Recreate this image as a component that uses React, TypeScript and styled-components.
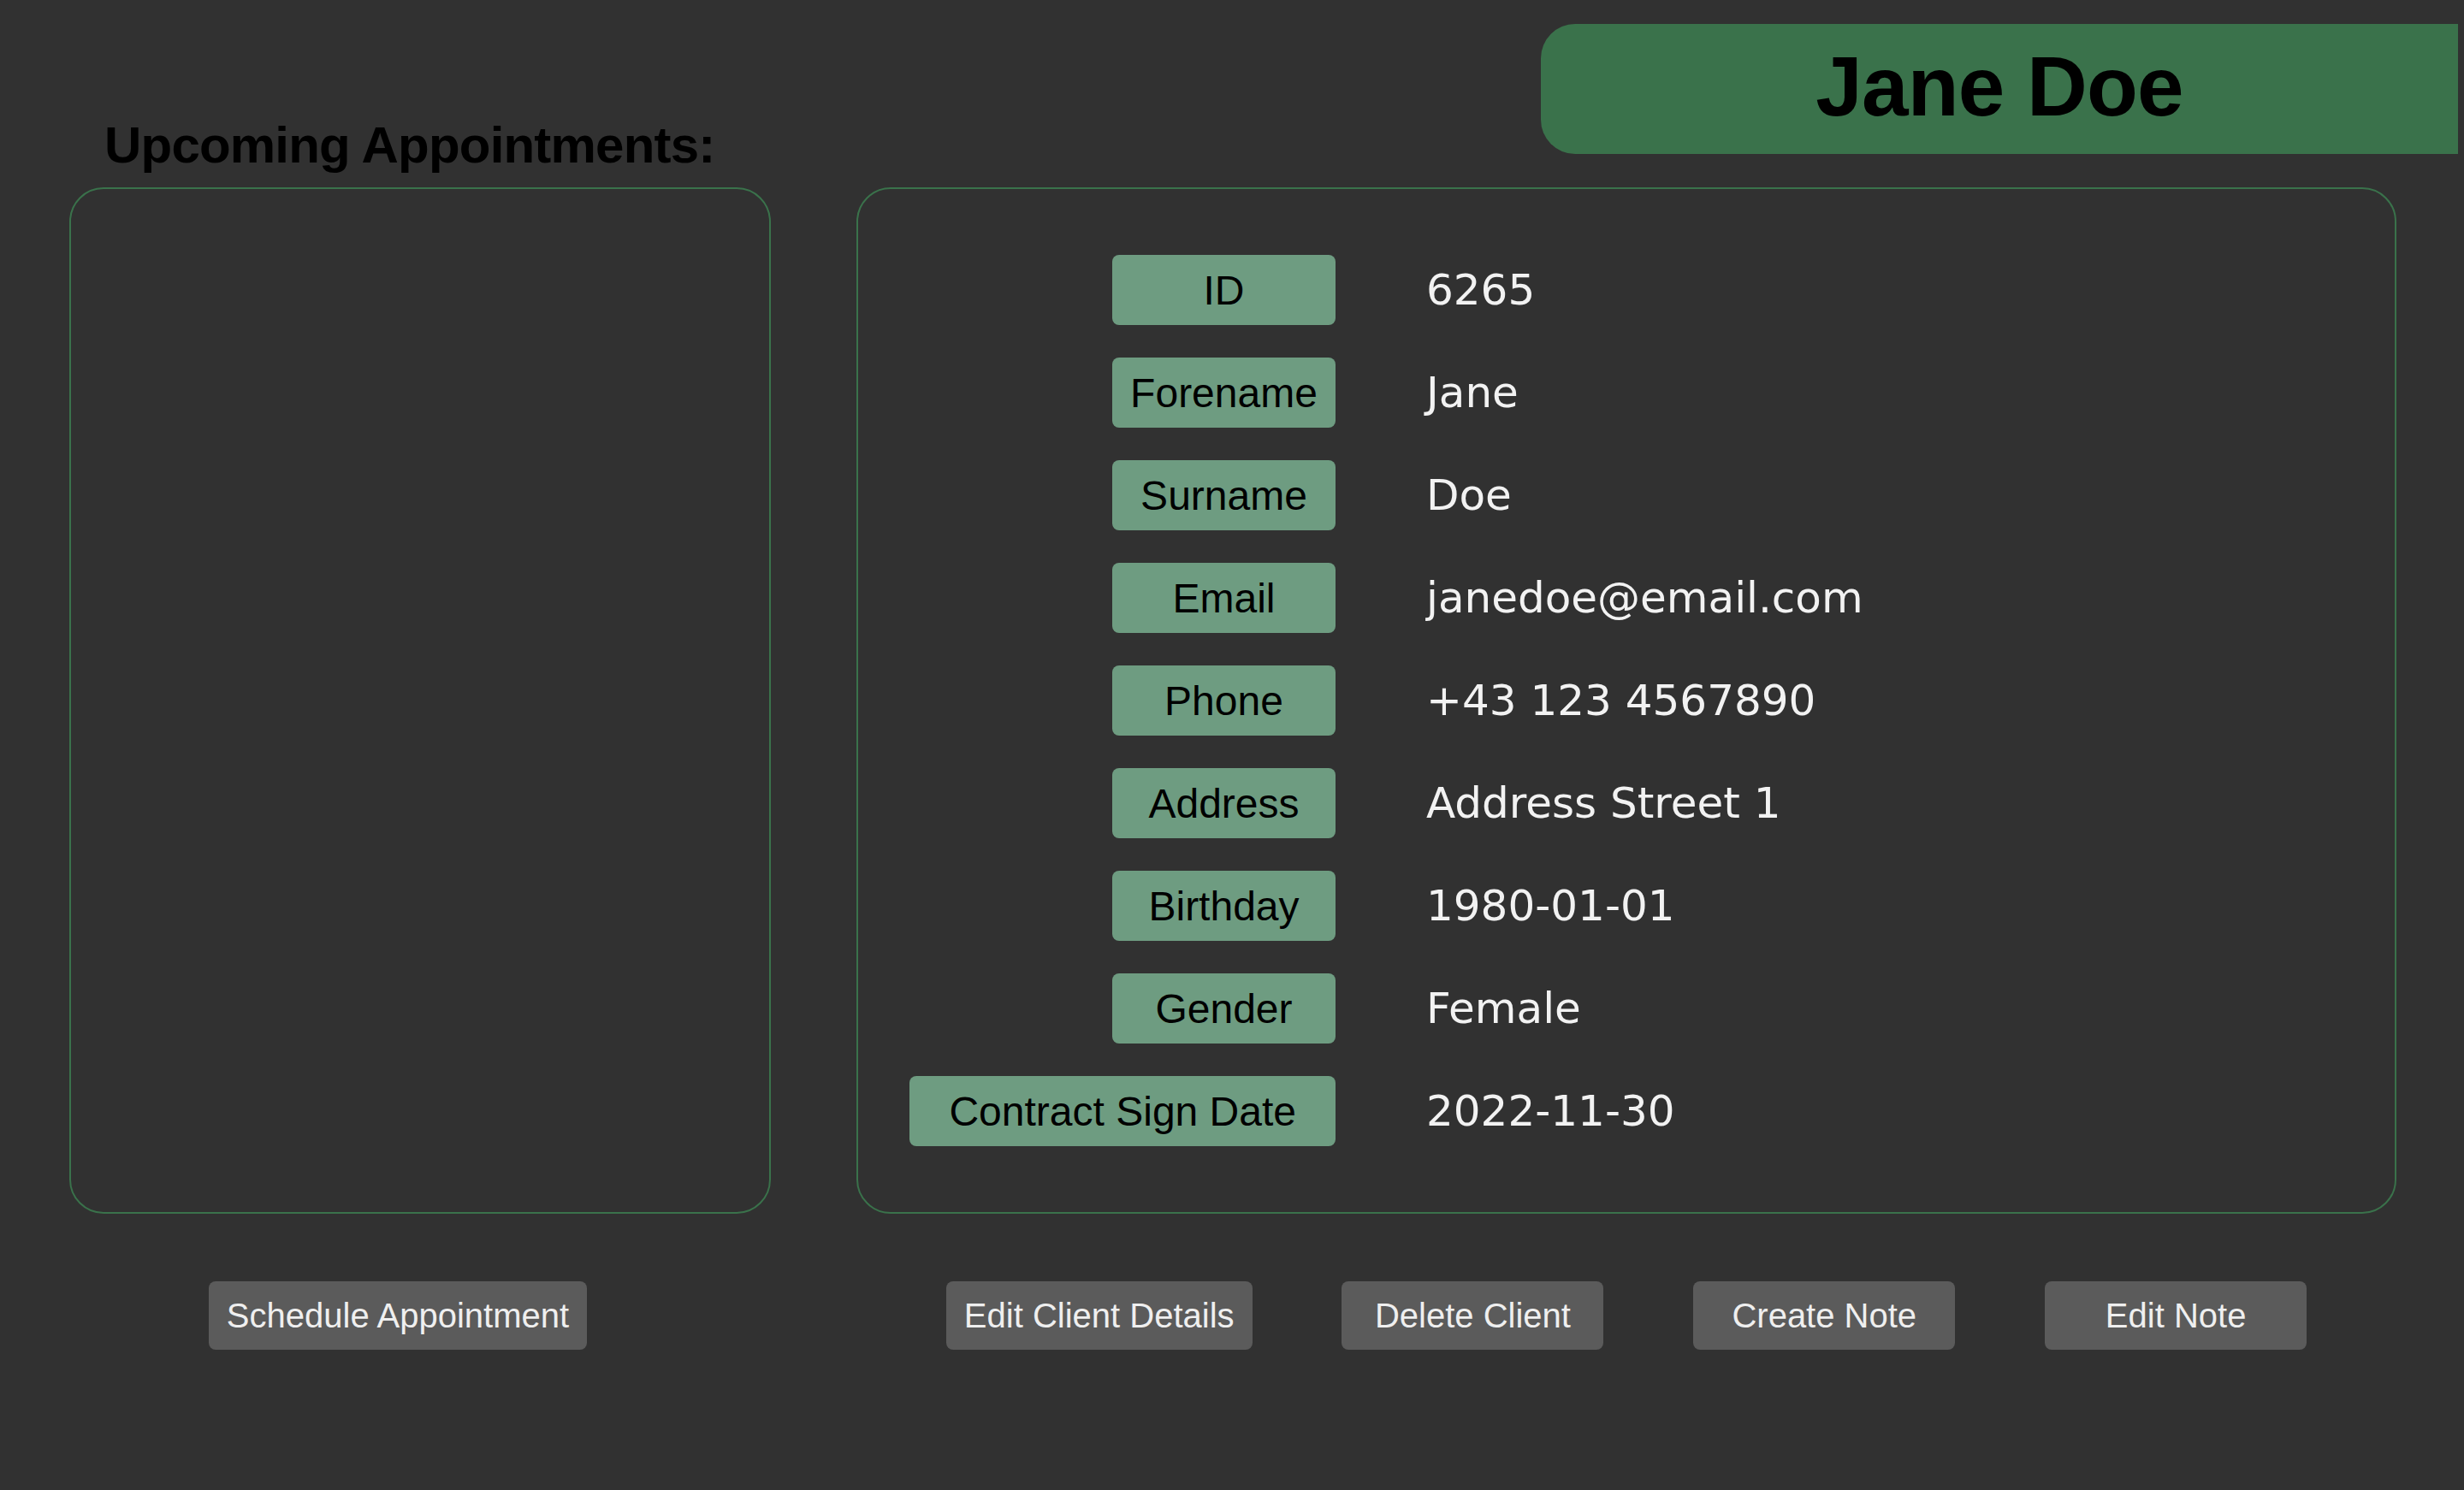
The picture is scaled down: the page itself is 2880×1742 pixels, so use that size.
import React from 'react';
import styled, { createGlobalStyle } from 'styled-components';

const GlobalStyle = createGlobalStyle`
  html, body {
    margin: 0;
    padding: 0;
    background: #313131;
  }

  * {
    box-sizing: border-box;
  }
`;

const Page = styled.div`
  min-height: 100vh;
  background: #313131;
  font-family: 'Liberation Sans', Arial, sans-serif;
`;

const TopRow = styled.header`
  display: flex;
  justify-content: space-between;
  align-items: flex-start;
  padding: 28px 7px 19px 122px;
`;

const SectionTitle = styled.h2`
  margin: 112px 0 0;
  font-size: 60px;
  line-height: 1;
  font-weight: 700;
  letter-spacing: -0.8px;
  color: #000000;
`;

const NameBanner = styled.div`
  width: 1072px;
  height: 152px;
  display: flex;
  align-items: center;
  justify-content: center;
  background: #3a724b;
  border-radius: 40px 0 0 40px;
`;

const ClientName = styled.h1`
  margin: -6px 0 0;
  font-size: 98px;
  line-height: 1;
  font-weight: 700;
  letter-spacing: -0.8px;
  color: #000000;
`;

const Columns = styled.div`
  display: flex;
  gap: 100px;
  padding-left: 81px;
`;

const Panel = styled.section<{ $width: number }>`
  width: ${p => p.$width}px;
  height: 1200px;
  border: 2px solid #3a724b;
  border-radius: 40px;
`;

const DetailsGrid = styled.div`
  display: grid;
  grid-template-columns: 500px auto;
  grid-auto-rows: 82px;
  column-gap: 106px;
  row-gap: 38px;
  align-items: center;
  padding: 77px 0 0 58px;
`;

const FieldLabel = styled.div<{ $pad: number }>`
  justify-self: end;
  min-width: 261px;
  height: 82px;
  padding: 0 ${p => p.$pad}px;
  display: flex;
  align-items: center;
  justify-content: center;
  background: #6e9c81;
  border-radius: 8px;
  color: #000000;
  font-size: 48px;
  white-space: nowrap;
`;

const FieldValue = styled.div`
  color: #f2f2f2;
  font-family: 'DejaVu Sans', Verdana, sans-serif;
  font-size: 50px;
  white-space: nowrap;
`;

const ButtonRow = styled.div<{ $width: number; $justify: string }>`
  width: ${p => p.$width}px;
  display: flex;
  justify-content: ${p => p.$justify};
`;

const FooterRow = styled.div`
  display: flex;
  gap: 100px;
  padding: 79px 0 0 81px;
`;

const ActionButton = styled.button<{ $shift?: number }>`
  height: 80px;
  min-width: 306px;
  padding: 0 21px;
  margin-right: ${p => p.$shift ?? 0}px;
  border: none;
  border-radius: 8px;
  background: #5b5b5b;
  color: #efefef;
  font-family: 'Liberation Sans', Arial, sans-serif;
  font-size: 40px;
  cursor: pointer;
`;

// long labels keep the wide padding, short ones shrink into the 261px pill
const client = [
  { label: 'ID', value: '6265' },
  { label: 'Forename', value: 'Jane' },
  { label: 'Surname', value: 'Doe' },
  { label: 'Email', value: 'janedoe@email.com' },
  { label: 'Phone', value: '+43 123 4567890' },
  { label: 'Address', value: 'Address Street 1' },
  { label: 'Birthday', value: '1980-01-01' },
  { label: 'Gender', value: 'Female' },
  { label: 'Contract Sign Date', value: '2022-11-30' },
];

const App: React.FC = () => {
  return (
    <Page>
      <GlobalStyle />
      <TopRow>
        <SectionTitle>Upcoming Appointments:</SectionTitle>
        <NameBanner>
          <ClientName>Jane Doe</ClientName>
        </NameBanner>
      </TopRow>

      <Columns>
        <Panel $width={820} />
        <Panel $width={1800}>
          <DetailsGrid>
            {client.map(({ label, value }) => (
              <React.Fragment key={label}>
                <FieldLabel $pad={label.length > 10 ? 46 : 20}>{label}</FieldLabel>
                <FieldValue>{value}</FieldValue>
              </React.Fragment>
            ))}
          </DetailsGrid>
        </Panel>
      </Columns>

      <FooterRow>
        <ButtonRow $width={820} $justify="center">
          <ActionButton $shift={52}>Schedule Appointment</ActionButton>
        </ButtonRow>
        <ButtonRow $width={1800} $justify="space-evenly">
          <ActionButton>Edit Client Details</ActionButton>
          <ActionButton>Delete Client</ActionButton>
          <ActionButton>Create Note</ActionButton>
          <ActionButton>Edit Note</ActionButton>
        </ButtonRow>
      </FooterRow>
    </Page>
  );
};

export default App;
